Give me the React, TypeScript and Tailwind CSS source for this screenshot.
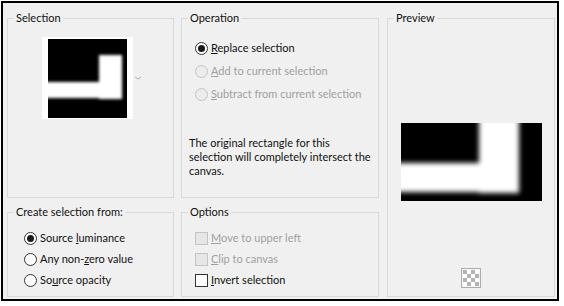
import React from "react";

function Radio({ checked = false, disabled = false }: { checked?: boolean; disabled?: boolean }) {
  return (
    <span
      className={
        disabled
          ? "w-[13px] h-[13px] rounded-full border border-[#c4c4c4] bg-[#ececec] flex items-center justify-center shrink-0"
          : "w-[13px] h-[13px] rounded-full border border-[#333333] bg-white flex items-center justify-center shrink-0"
      }
    >
      {checked ? <span className="w-[7px] h-[7px] rounded-full bg-[#1a1a1a]" /> : null}
    </span>
  );
}

function Check({ disabled = false }: { disabled?: boolean }) {
  return (
    <span
      className={
        disabled
          ? "w-[13px] h-[13px] border border-[#c4c4c4] bg-[#e6e6e6] shrink-0"
          : "w-[13px] h-[13px] border border-[#333333] bg-white shrink-0"
      }
    />
  );
}

function Thumb() {
  return (
    <svg width="79" height="79" viewBox="0 0 79 79">
      <defs>
        <filter id="b1" x="-20" y="-20" width="120" height="120" filterUnits="userSpaceOnUse">
          <feGaussianBlur stdDeviation="1.6" />
        </filter>
      </defs>
      <rect x="0" y="0" width="79" height="79" fill="#000" />
      <g filter="url(#b1)">
        <rect x="51" y="16" width="23" height="44" fill="#fff" />
        <rect x="-10" y="43" width="82" height="16" fill="#fff" />
        <rect x="60" y="57" width="12" height="3" fill="#fff" />
      </g>
    </svg>
  );
}

function PreviewImg() {
  return (
    <svg width="141" height="78" viewBox="0 0 141 78">
      <defs>
        <filter id="b2" x="-30" y="-30" width="200" height="140" filterUnits="userSpaceOnUse">
          <feGaussianBlur stdDeviation="2.8" />
        </filter>
      </defs>
      <rect x="0" y="0" width="141" height="78" fill="#000" />
      <g filter="url(#b2)">
        <rect x="78" y="-20" width="40" height="90" fill="#fff" />
        <rect x="-20" y="40" width="136" height="29" fill="#fff" />
      </g>
    </svg>
  );
}

function Checker() {
  const cells: React.ReactNode[] = [];
  for (let r = 0; r < 4; r++) {
    for (let c = 0; c < 4; c++) {
      if ((r + c) % 2 === 0) {
        cells.push(<rect key={`${r}-${c}`} x={2 + c * 4} y={2 + r * 4} width="4" height="4" fill="#b4b4b4" />);
      }
    }
  }
  return (
    <svg width="20" height="20" viewBox="0 0 20 20">
      <rect x="0.5" y="0.5" width="19" height="19" fill="#f4f4f4" stroke="#adadad" />
      <rect x="2" y="2" width="16" height="16" fill="#fff" />
      {cells}
    </svg>
  );
}

const fs = "border border-[#d9d9d9] min-w-0";
const lg = "ml-[6px] px-[2px] leading-[16px] whitespace-nowrap";

export default function App() {
  return (
    <div className="w-[564px] h-[306px] bg-white pl-[1px] pt-[1px] font-['Lato',sans-serif] text-[11px] text-[#111111]">
      <div className="w-[558px] h-[300px] border-2 border-black bg-[#f0f0f0] flex pl-[4px] pt-[7px] gap-[8px]">
        <div className="grid grid-cols-[167px_198px] grid-rows-[188px_93px] gap-x-[7px] gap-y-[6px]">
          <fieldset className={fs}>
            <legend className={lg}>Selection</legend>
            <div className="flex items-center pl-[34px] pt-[11px]">
              <div className="bg-white px-[6px] pt-[2px] pb-[1px]">
                <Thumb />
              </div>
              <svg width="6" height="4" viewBox="0 0 6 4" className="ml-[2px]">
                <path d="M0 1 L3 3 L6 1" fill="none" stroke="#b0b0b0" strokeWidth="1" />
              </svg>
            </div>
          </fieldset>

          <fieldset className={fs}>
            <legend className={lg}>Operation</legend>
            <div className="pl-[13px] pt-[11px] flex flex-col whitespace-nowrap">
              <div className="h-[23px] flex items-center gap-[3px]">
                <Radio checked />
                <span>
                  <u>R</u>eplace selection
                </span>
              </div>
              <div className="h-[23px] flex items-center gap-[3px] text-[#a0a0a0]">
                <Radio disabled />
                <span>
                  <u>A</u>dd to current selection
                </span>
              </div>
              <div className="h-[22px] flex items-center gap-[3px] text-[#a0a0a0]">
                <Radio disabled />
                <span>
                  <u>S</u>ubtract from current selection
                </span>
              </div>
            </div>
            <p className="pl-[7px] mt-[31px] leading-[14px] whitespace-nowrap">
              The original rectangle for this
              <br />
              selection will completely intersect the
              <br />
              canvas.
            </p>
          </fieldset>

          <fieldset className={fs}>
            <legend className={lg}>Create selection from:</legend>
            <div className="pl-[16px] pt-[8px] flex flex-col whitespace-nowrap">
              <div className="h-[21px] flex items-center gap-[3px]">
                <Radio checked />
                <span>
                  Source <u>l</u>uminance
                </span>
              </div>
              <div className="h-[21px] flex items-center gap-[3px]">
                <Radio />
                <span>
                  Any non-<u>z</u>ero value
                </span>
              </div>
              <div className="h-[21px] flex items-center gap-[3px]">
                <Radio />
                <span>
                  So<u>u</u>rce opacity
                </span>
              </div>
            </div>
          </fieldset>

          <fieldset className={fs}>
            <legend className={lg}>Options</legend>
            <div className="pl-[13px] pt-[8px] flex flex-col whitespace-nowrap">
              <div className="h-[21px] flex items-center gap-[3px] text-[#a0a0a0]">
                <Check disabled />
                <span>
                  <u>M</u>ove to upper left
                </span>
              </div>
              <div className="h-[21px] flex items-center gap-[3px] text-[#a0a0a0]">
                <Check disabled />
                <span>
                  <u>C</u>lip to canvas
                </span>
              </div>
              <div className="h-[21px] flex items-center gap-[3px]">
                <Check />
                <span>
                  <u>I</u>nvert selection
                </span>
              </div>
            </div>
          </fieldset>
        </div>

        <fieldset className={`${fs} w-[168px] h-[287px] flex flex-col items-center`}>
          <legend className={lg}>Preview</legend>
          <div className="flex flex-col items-center pt-[97px]">
            <PreviewImg />
            <div className="mt-[67px]">
              <Checker />
            </div>
          </div>
        </fieldset>
      </div>
    </div>
  );
}
